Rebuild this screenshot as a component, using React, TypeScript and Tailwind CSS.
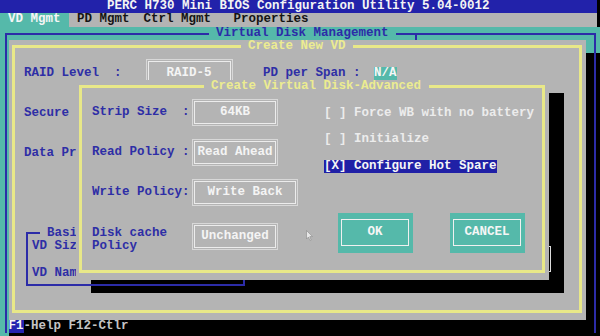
import React from 'react';

// text-mode screen: 80x25 cells, 7.5px x 13.33px each

function FieldBox({ w, h = 'h-[27px]', children }: { w: string; h?: string; children: React.ReactNode }) {
  return (
    <div className={`${w} ${h} border border-[#d8d8d8] p-px`}>
      <div className="flex h-full items-center justify-center border border-[#ececec] text-[#f4f4f4] whitespace-pre">
        {children}
      </div>
    </div>
  );
}

function DosButton({ label }: { label: string }) {
  return (
    <div className="w-[75px] h-[40px] bg-[#55b9aa] pt-[6px] pl-[3px] pr-[4px] pb-[7px]">
      <div className="flex h-full items-center justify-center border border-[#f0f0f0] text-[#f6f6f6]">{label}</div>
    </div>
  );
}

export default function App() {
  return (
    <div className="w-[600px] h-[336px] overflow-hidden bg-black font-['Liberation_Mono',monospace] font-bold text-[12.5px] leading-[13.33px]">
      {/* title bar */}
      <div className="w-[597px] h-[13.33px] bg-[#2222aa] pl-[107px] text-[#f4f4f4] whitespace-pre">
        PERC H730 Mini BIOS Configuration Utility 5.04-0012
      </div>

      {/* menu */}
      <div className="flex w-[597px] h-[13.33px] bg-[#b4b4b4] text-[#141414] whitespace-pre">
        <div className="w-[68.5px] bg-[#55b9aa] pl-[8px] text-[#f6f6f6]">VD Mgmt</div>
        <div className="ml-[8.5px]">PD Mgmt</div>
        <div className="ml-[14px]">Ctrl Mgmt</div>
        <div className="ml-[22.5px]">Properties</div>
      </div>

      {/* Virtual Disk Management panel */}
      <div className="relative h-[293.33px] bg-[#55b9aa]">
        <div className="absolute left-[23.5px] top-[26.67px] w-[577.5px] h-[266.67px] bg-black" />
        <div className="absolute left-[4.5px] top-[6px] w-[591.5px] h-[300px] border-2 border-b-0 border-[#2c2ca8]" />
        <div className="absolute left-[208.5px] top-0 h-[13.33px] px-[7.5px] bg-[#55b9aa] text-[#2c2ca8]">
          Virtual Disk Management
        </div>
        <div className="absolute left-[415px] top-[6px] w-[2px] h-[8px] bg-[#2c2ca8]" />

        {/* Create New VD */}
        <div className="absolute left-[8.5px] top-[13.33px] w-[577.5px] h-[280px] bg-[#b4b4b4]">
          <div className="absolute left-[82.5px] top-[53.33px] w-[472.5px] h-[200px] bg-black" />
          <div className="absolute left-[3px] top-[5.5px] right-[4px] bottom-[7px] border-[3px] border-[#e8e888]" />
          <div className="absolute left-[232px] top-0 h-[13.33px] px-[7.5px] bg-[#b4b4b4] text-[#ecec90]">
            Create New VD
          </div>

          <div className="relative pl-[15.5px] pt-[19px] text-[#2e2ea6] whitespace-pre">
            <div className="flex items-center">
              <div className="w-[121.5px]">RAID Level  :</div>
              <FieldBox w="w-[87px]" h="h-[30px]">RAID-5</FieldBox>
              <div className="ml-[30.5px]">PD per Span :</div>
              <div className="ml-[13.5px] bg-[#55b9aa] text-[#f6f6f6]">N/A</div>
            </div>
            <div className="mt-[17.67px]">Secure</div>
            <div className="mt-[26.67px]">Data Pr</div>

            <div className="relative mt-[72px] ml-[2px] w-[219px] h-[54px] border-2 border-[#2c2ca8] pl-[4px] pt-[6px]">
              <div className="absolute left-[11.5px] -top-[7.33px] px-[7.5px] bg-[#b4b4b4]">Basi</div>
              <div>VD Siz</div>
              <div className="mt-[13.33px]">VD Nam</div>
            </div>

            <div className="absolute left-[500px] top-[206px] w-[42.5px] h-[26px] border border-[#dcdcdc]" />
          </div>

          {/* Create Virtual Disk-Advanced */}
          <div className="absolute left-[67.5px] top-[40px] w-[472.5px] h-[200px] bg-[#b4b4b4]">
            <div className="absolute left-[3px] top-[5.5px] right-[3.5px] bottom-[7px] border-[3px] border-[#e8e888]" />
            <div className="absolute left-[127.5px] top-0 h-[13.33px] px-[7.5px] bg-[#b4b4b4] text-[#ecec90]">
              Create Virtual Disk-Advanced
            </div>

            <div className="relative flex pl-[16px] pt-[19.5px] whitespace-pre">
              <div className="grid w-[232px] grid-cols-[100px_auto] items-center gap-y-[13px] text-[#2e2ea6]">
                <div>Strip Size  :</div>
                <FieldBox w="w-[86px]">64KB</FieldBox>
                <div>Read Policy :</div>
                <FieldBox w="w-[86px]">Read Ahead</FieldBox>
                <div>Write Policy:</div>
                <FieldBox w="w-[106px]">Write Back</FieldBox>
                <div className="self-start mt-[7.17px]">
                  <div>Disk cache</div>
                  <div>Policy</div>
                </div>
                <FieldBox w="w-[86px]">Unchanged</FieldBox>
              </div>

              <div className="flex flex-col mt-[7.17px] text-[#ececec]">
                <div className="h-[13.33px]">[ ] Force WB with no battery</div>
                <div className="h-[13.33px] mt-[13.33px]">[ ] Initialize</div>
                <div className="h-[13.33px] mt-[13.33px] self-start bg-[#2020a6] text-[#f6f6f6]">[X] Configure Hot Spare</div>
                <div className="flex gap-[37px] mt-[39.67px] ml-[14px]">
                  <DosButton label="OK" />
                  <DosButton label="CANCEL" />
                </div>
              </div>
            </div>

            {/* mouse pointer */}
            <svg className="absolute left-[230px] top-[150px]" width="7" height="11" viewBox="0 0 7 11">
              <path d="M0.5 0.5 L0.5 9 L2.5 7 L4 10.5 L5.2 10 L3.8 6.6 L6.5 6.6 Z" fill="#e8e8e8" stroke="#8a8a8a" strokeWidth="0.6" />
            </svg>
          </div>
        </div>
      </div>

      {/* status line */}
      <div className="flex h-[16px]">
        <div className="w-[8.5px] bg-[#55b9aa]" />
        <div className="flex-1 bg-black whitespace-pre">
          <span className="bg-[#2424b0] text-[#f6f6f6]">F1</span>
          <span className="text-[#c4c4c4]">-Help F12-Ctlr</span>
        </div>
      </div>
    </div>
  );
}
